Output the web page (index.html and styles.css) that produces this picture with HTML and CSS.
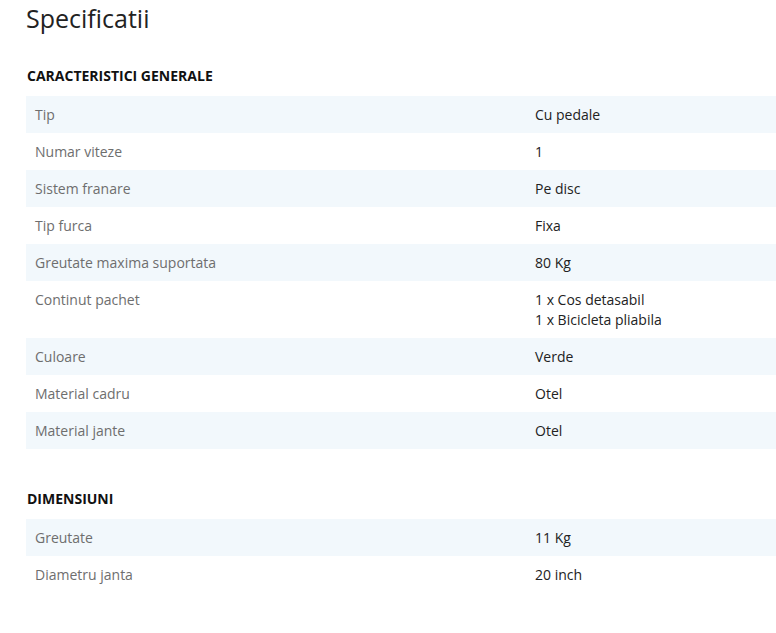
FILE: index.html
```html
<!DOCTYPE html>
<html lang="ro">
<head>
<meta charset="utf-8">
<title>Specificatii</title>
<link rel="stylesheet" href="styles.css">
</head>
<body>
<div class="page">
  <h1 class="title">Specificatii</h1>

  <section class="group">
    <h2 class="group-title">CARACTERISTICI GENERALE</h2>
    <table class="specs">
      <tr><td class="label">Tip</td><td class="value">Cu pedale</td></tr>
      <tr><td class="label">Numar viteze</td><td class="value">1</td></tr>
      <tr><td class="label">Sistem franare</td><td class="value">Pe disc</td></tr>
      <tr><td class="label">Tip furca</td><td class="value">Fixa</td></tr>
      <tr><td class="label">Greutate maxima suportata</td><td class="value">80 Kg</td></tr>
      <tr><td class="label">Continut pachet</td><td class="value">1 x Cos detasabil<br>1 x Bicicleta pliabila</td></tr>
      <tr><td class="label">Culoare</td><td class="value">Verde</td></tr>
      <tr><td class="label">Material cadru</td><td class="value">Otel</td></tr>
      <tr><td class="label">Material jante</td><td class="value">Otel</td></tr>
    </table>
  </section>

  <section class="group group-second">
    <h2 class="group-title">DIMENSIUNI</h2>
    <table class="specs">
      <tr><td class="label">Greutate</td><td class="value">11 Kg</td></tr>
      <tr><td class="label">Diametru janta</td><td class="value">20 inch</td></tr>
    </table>
  </section>
</div>
</body>
</html>
```
FILE: styles.css
```css
html, body {
  margin: 0;
  padding: 0;
  background: #ffffff;
}

body {
  font-family: "Open Sans", "Liberation Sans", sans-serif;
  color: #222222;
}

.page {
  padding: 0 0 0 26px;
}

.title {
  margin: 0;
  font-size: 25px;
  font-weight: 400;
  line-height: 36px;
  color: #222222;
}

.group {
  margin-top: 31px;
}

.group-second {
  margin-top: 41px;
}

.group-title {
  margin: 0 0 11px 1px;
  font-size: 14px;
  font-weight: 700;
  line-height: 18px;
  color: #111111;
}

.specs {
  width: 100%;
  border-collapse: collapse;
  font-size: 14px;
  line-height: 20px;
}

.specs tr:nth-child(odd) {
  background: #f2f8fc;
}

.specs td {
  padding: 9px 9px 8px 9px;
  vertical-align: top;
}

.label {
  width: 482px;
  color: #6e6e6e;
}

.value {
  color: #222222;
}
```
